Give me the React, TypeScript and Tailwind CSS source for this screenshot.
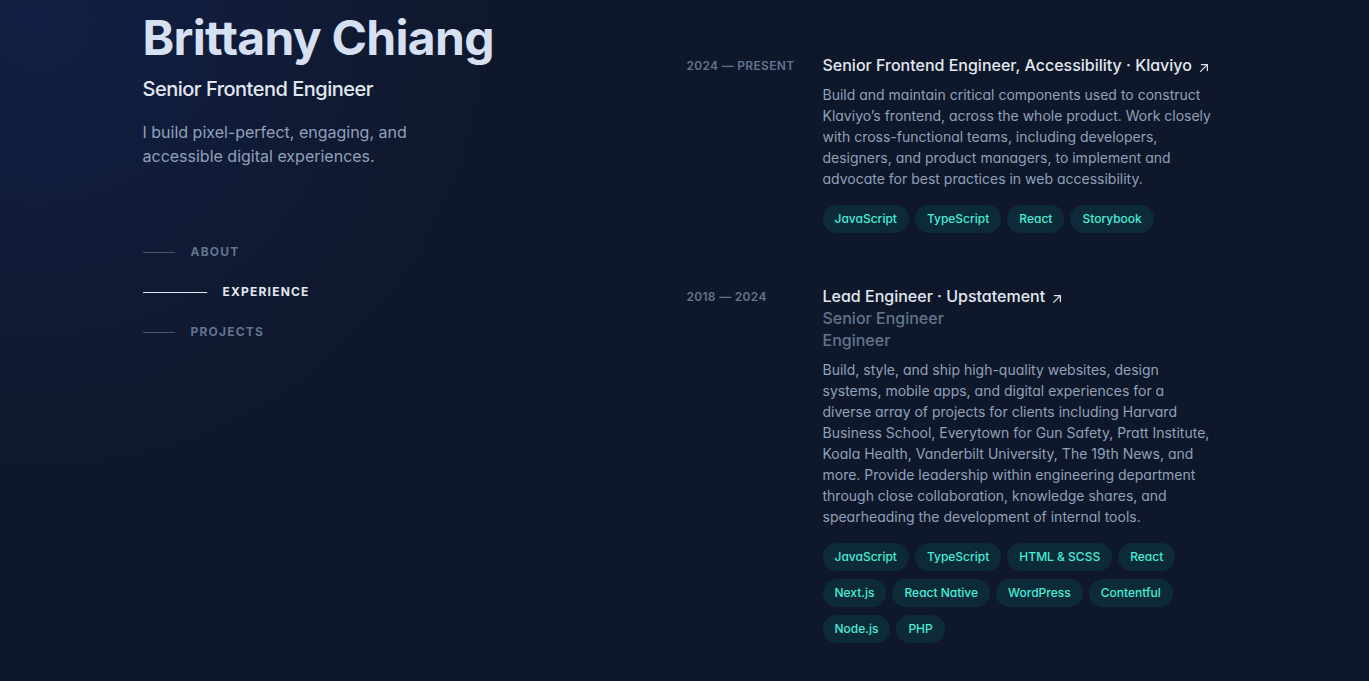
import React from "react";

const Arrow = () => (
  <svg
    xmlns="http://www.w3.org/2000/svg"
    viewBox="0 0 20 20"
    fill="currentColor"
    className="ml-1 inline-block h-4 w-4 shrink-0 translate-y-px"
    aria-hidden="true"
  >
    <path
      fillRule="evenodd"
      d="M5.22 14.78a.75.75 0 001.06 0l7.22-7.22v5.69a.75.75 0 001.5 0v-7.5a.75.75 0 00-.75-.75h-7.5a.75.75 0 000 1.5h5.69l-7.22 7.22a.75.75 0 000 1.06z"
      clipRule="evenodd"
    />
  </svg>
);

type Job = {
  date: string;
  title: string;
  company: string;
  subtitles?: string[];
  desc: string;
  tags: string[];
};

const jobs: Job[] = [
  {
    date: "2024 — Present",
    title: "Senior Frontend Engineer, Accessibility ·",
    company: "Klaviyo",
    desc: "Build and maintain critical components used to construct Klaviyo’s frontend, across the whole product. Work closely with cross-functional teams, including developers, designers, and product managers, to implement and advocate for best practices in web accessibility.",
    tags: ["JavaScript", "TypeScript", "React", "Storybook"],
  },
  {
    date: "2018 — 2024",
    title: "Lead Engineer ·",
    company: "Upstatement",
    subtitles: ["Senior Engineer", "Engineer"],
    desc: "Build, style, and ship high-quality websites, design systems, mobile apps, and digital experiences for a diverse array of projects for clients including Harvard Business School, Everytown for Gun Safety, Pratt Institute, Koala Health, Vanderbilt University, The 19th News, and more. Provide leadership within engineering department through close collaboration, knowledge shares, and spearheading the development of internal tools.",
    tags: [
      "JavaScript",
      "TypeScript",
      "HTML & SCSS",
      "React",
      "Next.js",
      "React Native",
      "WordPress",
      "Contentful",
      "Node.js",
      "PHP",
    ],
  },
];

const nav = [
  { label: "About", active: false },
  { label: "Experience", active: true },
  { label: "Projects", active: false },
];

export default function App() {
  return (
    <div className="min-h-screen bg-[#0f172a] font-['Inter','Noto_Sans',sans-serif] text-slate-400 antialiased">
      <div className="min-h-screen bg-[radial-gradient(600px_at_40px_20px,rgba(29,78,216,0.15),transparent_80%)]">
        <div className="mx-auto flex max-w-[1280px] px-[98px]">
          <header className="w-[544px] shrink-0 pt-[14px]">
            <h1 className="text-5xl font-bold tracking-[-0.015em] text-[#d6e0f2]">
              Brittany Chiang
            </h1>
            <h2 className="mt-[13px] text-xl font-medium tracking-tight text-slate-200">
              Senior Frontend Engineer
            </h2>
            <p className="mt-[17px] max-w-xs text-base leading-normal text-slate-400">
              I build pixel-perfect, engaging, and accessible digital experiences.
            </p>
            <nav className="w-max">
              <ul className="mt-16">
                {nav.map((n) => (
                  <li key={n.label}>
                    <a className="flex items-center py-3" href="#">
                      <span
                        className={
                          n.active
                            ? "mr-4 h-px w-16 bg-slate-200"
                            : "mr-4 h-px w-8 bg-slate-600"
                        }
                      />
                      <span
                        className={
                          n.active
                            ? "text-xs font-bold uppercase tracking-widest text-slate-200"
                            : "text-xs font-bold uppercase tracking-widest text-slate-500"
                        }
                      >
                        {n.label}
                      </span>
                    </a>
                  </li>
                ))}
              </ul>
            </nav>
          </header>
          <main className="w-[528px] shrink-0 pt-[54px] [font-feature-settings:'cv11']">
            <ol>
              {jobs.map((j) => (
                <li key={j.date} className="mb-12">
                  <div className="grid grid-cols-8 gap-4 pb-1">
                    <header className="col-span-2 mb-2 mt-1 text-xs font-semibold uppercase tracking-wide text-slate-500">
                      {j.date}
                    </header>
                    <div className="col-span-6">
                      <h3 className="font-medium leading-snug text-slate-200">
                        <a href="#" className="inline-flex items-baseline text-base font-medium leading-tight text-slate-200">
                          <span>
                            {j.title}{" "}
                            <span className="inline-block">
                              {j.company}
                              <Arrow />
                            </span>
                          </span>
                        </a>
                        {j.subtitles?.map((s) => (
                          <div key={s} className="text-slate-500">
                            {s}
                          </div>
                        ))}
                      </h3>
                      <p className="mt-2 text-sm leading-normal">{j.desc}</p>
                      <ul className="mt-2 flex flex-wrap">
                        {j.tags.map((t) => (
                          <li key={t} className="mr-1.5 mt-2">
                            <div className="flex items-center rounded-full bg-teal-400/10 px-3 py-1 text-xs font-medium leading-5 text-teal-300">
                              {t}
                            </div>
                          </li>
                        ))}
                      </ul>
                    </div>
                  </div>
                </li>
              ))}
            </ol>
          </main>
        </div>
      </div>
    </div>
  );
}
